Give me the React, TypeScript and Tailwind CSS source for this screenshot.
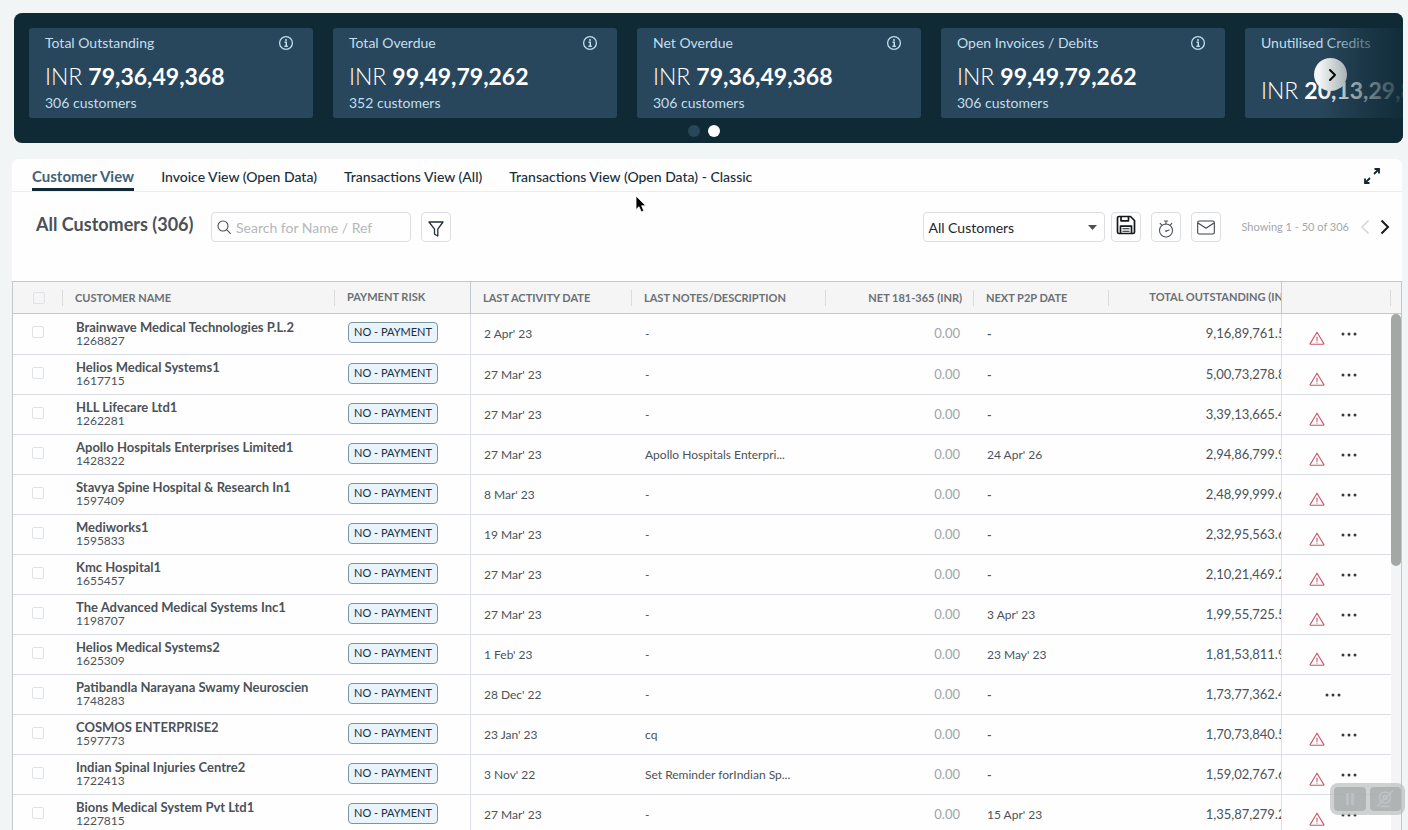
import React from "react";

type Row = {
  name: string;
  id: string;
  activity: string;
  note: string;
  p2p: string;
  total: string;
  alert: boolean;
};

const rows: Row[] = [
  { name: "Brainwave Medical Technologies P.L.2", id: "1268827", activity: "2 Apr' 23", note: "-", p2p: "-", total: "9,16,89,761.50", alert: true },
  { name: "Helios Medical Systems1", id: "1617715", activity: "27 Mar' 23", note: "-", p2p: "-", total: "5,00,73,278.80", alert: true },
  { name: "HLL Lifecare Ltd1", id: "1262281", activity: "27 Mar' 23", note: "-", p2p: "-", total: "3,39,13,665.40", alert: true },
  { name: "Apollo Hospitals Enterprises Limited1", id: "1428322", activity: "27 Mar' 23", note: "Apollo Hospitals Enterpri...", p2p: "24 Apr' 26", total: "2,94,86,799.90", alert: true },
  { name: "Stavya Spine Hospital & Research In1", id: "1597409", activity: "8 Mar' 23", note: "-", p2p: "-", total: "2,48,99,999.60", alert: true },
  { name: "Mediworks1", id: "1595833", activity: "19 Mar' 23", note: "-", p2p: "-", total: "2,32,95,563.60", alert: true },
  { name: "Kmc Hospital1", id: "1655457", activity: "27 Mar' 23", note: "-", p2p: "-", total: "2,10,21,469.20", alert: true },
  { name: "The Advanced Medical Systems Inc1", id: "1198707", activity: "27 Mar' 23", note: "-", p2p: "3 Apr' 23", total: "1,99,55,725.50", alert: true },
  { name: "Helios Medical Systems2", id: "1625309", activity: "1 Feb' 23", note: "-", p2p: "23 May' 23", total: "1,81,53,811.90", alert: true },
  { name: "Patibandla Narayana Swamy Neuroscien", id: "1748283", activity: "28 Dec' 22", note: "-", p2p: "-", total: "1,73,77,362.40", alert: false },
  { name: "COSMOS ENTERPRISE2", id: "1597773", activity: "23 Jan' 23", note: "cq", p2p: "-", total: "1,70,73,840.50", alert: true },
  { name: "Indian Spinal Injuries Centre2", id: "1722413", activity: "3 Nov' 22", note: "Set Reminder forIndian Sp...", p2p: "-", total: "1,59,02,767.60", alert: true },
  { name: "Bions Medical System Pvt Ltd1", id: "1227815", activity: "27 Mar' 23", note: "-", p2p: "15 Apr' 23", total: "1,35,87,279.20", alert: true },
];

const cards = [
  { title: "Total Outstanding", amount: "79,36,49,368", sub: "306 customers" },
  { title: "Total Overdue", amount: "99,49,79,262", sub: "352 customers" },
  { title: "Net Overdue", amount: "79,36,49,368", sub: "306 customers" },
  { title: "Open Invoices / Debits", amount: "99,49,79,262", sub: "306 customers" },
  { title: "Unutilised Credits", amount: "20,13,29,894", sub: "" },
];

const tabs = ["Customer View", "Invoice View (Open Data)", "Transactions View (All)", "Transactions View (Open Data) - Classic"];

function InfoIcon() {
  return (
    <svg className="size-4" viewBox="0 0 16 16" fill="none" stroke="currentColor">
      <circle cx="8" cy="8" r="6.4" strokeWidth="1.3" />
      <circle cx="8" cy="4.9" r="1" fill="currentColor" stroke="none" />
      <path d="M6.6 7.3H8.3V11M6.4 11.2H9.8" strokeWidth="1.4" />
    </svg>
  );
}

function WarningIcon() {
  return (
    <svg className="h-4 w-4" viewBox="0 0 16 16" fill="none" stroke="#cc5566" strokeLinejoin="round" strokeLinecap="round">
      <path d="M8 2.200 14.900 13.600a.4.4 0 0 1-.3.6H1.400a.4.4 0 0 1-.3-.6Z" strokeWidth="1.100" />
      <path d="M8 7v3.400M8 12v.3" strokeWidth="1.100" />
    </svg>
  );
}

function DotsIcon() {
  return (
    <svg className="h-1 w-4" viewBox="0 0 16 4" fill="#343b42">
      <circle cx="2" cy="2" r="1.5" />
      <circle cx="8" cy="2" r="1.5" />
      <circle cx="14" cy="2" r="1.5" />
    </svg>
  );
}

function ToolButton({ label, children }: { label: string; children: React.ReactNode }) {
  return (
    <button type="button" aria-label={label} className="flex size-[30px] shrink-0 items-center justify-center rounded border border-[#dcdee2] bg-white">
      {children}
    </button>
  );
}

function SummaryBar() {
  return (
    <section className="relative mr-[5px] ml-[14px] shrink-0 overflow-hidden rounded-lg bg-[#0f2a35] pt-[15px] pb-[6px] pl-[15px]">
      <div className="flex gap-5">
        {cards.map((card) => (
          <article key={card.title} className="flex h-[90px] w-[284px] shrink-0 flex-col rounded-[3px] bg-[#29475c] px-4 pb-[6px] text-[#c3deed]">
            <div className="flex h-[30px] items-center justify-between pr-[3px]">
              <h2 className="text-sm">{card.title}</h2>
              <InfoIcon />
            </div>
            <p className={card.sub ? "flex flex-1 items-center gap-[6px] text-[23px] text-white" : "flex flex-1 items-center gap-[6px] pt-[10px] text-[23px] text-white"}>
              <span className="font-light">INR</span>
              <span className="font-bold">{card.amount}</span>
            </p>
            {card.sub && <p className="text-sm leading-[18px]">{card.sub}</p>}
          </article>
        ))}
      </div>
      <div className="mt-[7px] flex justify-center gap-2 pr-6">
        <button type="button" aria-label="Page 1" className="size-3 rounded-full bg-[#29475c]" />
        <button type="button" aria-label="Page 2" className="size-3 rounded-full bg-white" />
      </div>
      <button type="button" aria-label="Next" className="absolute top-[45px] right-[56px] flex size-[33px] items-center justify-center rounded-full bg-[#f5f5f5]">
        <svg className="ml-1 size-4" viewBox="0 0 16 16" fill="none" stroke="#000" strokeWidth="2" strokeLinecap="round" strokeLinejoin="round">
          <path d="m5 3 5 5-5 5" />
        </svg>
      </button>
      <div className="pointer-events-none absolute inset-y-0 right-0 w-[84px] bg-linear-to-r from-[#0f2a35]/0 via-[#0f2a35]/50 to-[#0f2a35]/90" />
    </section>
  );
}

function Tabs() {
  return (
    <nav className="flex h-[33px] shrink-0 justify-between border-b border-[#eceef1] pr-[21px] pl-5">
      <div className="flex gap-[27px]">
        {tabs.map((tab, i) => (
          <a
            key={tab}
            href="#"
            className={
              i === 0
                ? "flex h-8 items-center border-b-3 border-[#0f2a35] pt-[5px] text-[15px] font-bold text-[#3f6279]"
                : "flex h-8 items-center pt-[2px] text-[14px] font-medium text-[#182f3b]"
            }
          >
            {tab}
          </a>
        ))}
      </div>
      <button type="button" aria-label="Expand" className="pt-px">
        <svg className="size-[18px]" viewBox="0 0 18 18" fill="none" stroke="#15262e" strokeWidth="1.8">
          <path d="M11.500 2h4.500v4.500M16 2l-5 5M6.500 16H2v-4.500M2 16l5-5" />
        </svg>
      </button>
    </nav>
  );
}

function Toolbar() {
  return (
    <div className="flex h-[89px] shrink-0 items-start justify-between pt-5 pr-[10px] pl-6">
      <div className="flex">
        <h1 className="w-[175px] whitespace-nowrap text-lg leading-6 font-bold text-[#4b5157]">All Customers (306)</h1>
        <label className="flex h-[30px] w-[200px] items-center gap-[5px] rounded border border-[#dcdee2] px-[5px]">
          <svg className="size-[14px] shrink-0" viewBox="0 0 14 14" fill="none" stroke="#4b5157" strokeWidth="1.1" strokeLinecap="round">
            <circle cx="6" cy="6" r="5" />
            <path d="m9.800 9.800 3.500 3.500" />
          </svg>
          <input aria-label="Search" placeholder="Search for Name / Ref" className="min-w-0 flex-1 text-[14px] outline-none placeholder:text-[#b3b8bc]" />
        </label>
        <div className="ml-[10px]">
          <ToolButton label="Filter">
            <svg className="mt-1 size-4" viewBox="0 0 16 16" fill="none" stroke="#23303a" strokeWidth="1.3" strokeLinejoin="round">
              <path d="M1 1h14L9.800 8.200V15l-3.300-1.800V8.200Z" />
            </svg>
          </ToolButton>
        </div>
      </div>
      <div className="flex items-center">
        <div className="relative">
          <select aria-label="Customer filter" className="h-[30px] w-[182px] appearance-none rounded border border-[#dcdee2] bg-white pl-1 text-[14px] text-[#1e252b]">
            <option>All Customers</option>
          </select>
          <svg className="pointer-events-none absolute top-[13px] right-2 h-[5px] w-[9px]" viewBox="0 0 9 5" fill="#4b5157">
            <path d="M0 0h9L4.500 5Z" />
          </svg>
        </div>
        <div className="ml-[6px] flex gap-[10px]">
          <ToolButton label="Save">
            <svg className="mb-[5px] size-5" viewBox="0 0 20 20" fill="none" stroke="#15191d" strokeWidth="1.7" strokeLinejoin="round">
              <path d="M1.500 3a1.500 1.500 0 0 1 1.500-1.500h11.500l4 4V17a1.500 1.500 0 0 1-1.500 1.500H3A1.500 1.500 0 0 1 1.500 17Z" />
              <path d="M5 1.500v4.300h7.500V1.500M4.500 18.500v-7.300h11v7.300" />
              <path d="M6.500 13.700h7M6.500 16.200h7" strokeWidth="1.100" />
            </svg>
          </ToolButton>
          <ToolButton label="Schedule">
            <svg className="mt-[3px] h-[18px] w-4" viewBox="0 0 16 18" fill="none" stroke="#4b5157" strokeWidth="1.1" strokeLinecap="round">
              <circle cx="8" cy="10.500" r="6.500" />
              <path d="M6.300 1h3.400M8 1v3M2.200 3.300l1.300 1.500M13.800 3.300l-1.300 1.500M8 11.200l3-1.200" />
              <circle cx="8" cy="11" r=".8" fill="#4b5157" stroke="none" />
            </svg>
          </ToolButton>
          <ToolButton label="Email">
            <svg className="h-[15px] w-[18px]" viewBox="0 0 18 15" fill="none" stroke="#3f454b" strokeWidth="1.100" strokeLinejoin="round">
              <rect x=".7" y="1" width="16.600" height="13" rx="1.500" />
              <path d="m1 3 8 5.300L17 3" />
            </svg>
          </ToolButton>
        </div>
        <span className="ml-5 text-[11px] text-[#a3a8ad]">Showing 1 - 50 of 306</span>
        <button type="button" aria-label="Previous page" className="ml-[7px]">
          <svg className="size-4" viewBox="0 0 16 16" fill="none" stroke="#d3d6d9" strokeWidth="1.500">
            <path d="M12.500 1.500 6 8l6.500 6.500" />
          </svg>
        </button>
        <button type="button" aria-label="Next page" className="ml-1">
          <svg className="size-4" viewBox="0 0 16 16" fill="none" stroke="#15191d" strokeWidth="2">
            <path d="M5.500 1.500 12 8l-6.500 6.500" />
          </svg>
        </button>
      </div>
    </div>
  );
}

const headInner = "h-4 border-r border-[#d9dde0] pl-3 text-left leading-4";
const check = "block size-3 appearance-none rounded-[2px] border border-[#dfe2e5] bg-transparent";
const cell = "border-b border-[#dcdfe4] p-0";

function CustomerTable() {
  return (
    <div className="relative min-h-0 flex-1 overflow-hidden border border-b-0 border-[#c3c8cd]">
      <table className="w-full table-fixed border-separate border-spacing-0 text-[12px] text-[#4c5258]">
        <colgroup>
          <col className="w-[50px]" />
          <col className="w-[272px]" />
          <col className="w-[136px]" />
          <col className="w-[161px]" />
          <col className="w-[194px]" />
          <col className="w-[148px]" />
          <col className="w-[135px]" />
          <col />
          <col className="w-[109px]" />
          <col className="w-[10px]" />
        </colgroup>
        <thead>
          <tr className="h-8 bg-[#f5f5f6] text-[11px] whitespace-nowrap text-[#6b7075] [&>th]:border-b [&>th]:border-[#c3c8cd] [&>th]:p-0 [&>th]:font-bold">
            <th>
              <div className="flex h-4 items-center border-r border-[#d9dde0] pl-5">
                <input type="checkbox" aria-label="Select all" className={check} />
              </div>
            </th>
            <th><div className={headInner}>CUSTOMER NAME</div></th>
            <th className="border-r"><div className="pl-3 text-left">PAYMENT RISK</div></th>
            <th><div className={headInner}>LAST ACTIVITY DATE</div></th>
            <th><div className={headInner}>LAST NOTES/DESCRIPTION</div></th>
            <th><div className="h-4 border-r border-[#d9dde0] pr-[11px] text-right leading-4">NET 181-365 (INR)</div></th>
            <th><div className={headInner}>NEXT P2P DATE</div></th>
            <th className="overflow-hidden border-r"><div className="-mr-3 text-right">TOTAL OUTSTANDING (INR)</div></th>
            <th><div className="h-4 border-r border-[#d9dde0]" /></th>
            <th />
          </tr>
        </thead>
        <tbody>
          {rows.map((row) => (
            <tr key={row.id} className="h-10 whitespace-nowrap first:h-[41px]">
              <td className={cell}>
                <input type="checkbox" aria-label={`Select ${row.name}`} className={`${check} mb-1 ml-[19px]`} />
              </td>
              <td className={cell}>
                <div className="pb-px pl-[13px] leading-[14px]">
                  <div className="text-[13px] font-bold">{row.name}</div>
                  <div>{row.id}</div>
                </div>
              </td>
              <td className={`${cell} border-r`}>
                <span className="mb-[3px] ml-[13px] flex h-[21px] w-[90px] items-center justify-center rounded border border-[#7d95a1] bg-[#e8f3fb] text-[11px] text-[#182f3b]">
                  NO - PAYMENT
                </span>
              </td>
              <td className={cell}><div className="pl-[13px]">{row.activity}</div></td>
              <td className={cell}><div className="pl-[13px]">{row.note}</div></td>
              <td className={cell}><div className="pr-[14px] text-right text-[13px] text-[#a0a4a8]">0.00</div></td>
              <td className={cell}>
                <div className={row.p2p === "-" ? "pl-[13px] font-bold" : "pl-[13px]"}>{row.p2p}</div>
              </td>
              <td className={`${cell} overflow-hidden border-r`}><div className="-mr-3 text-right text-[13px]">{row.total}</div></td>
              <td className={cell}>
                <div className="flex items-center justify-center gap-4 pr-2">
                  {row.alert && (
                    <button type="button" aria-label="Alert" className="pt-2">
                      <WarningIcon />
                    </button>
                  )}
                  <button type="button" aria-label="More actions">
                    <DotsIcon />
                  </button>
                </div>
              </td>
              <td className="p-0" />
            </tr>
          ))}
        </tbody>
      </table>
      <div className="absolute top-8 right-0 bottom-0 w-[10px] bg-[#f3f4f5]">
        <div className="h-[252px] rounded-full bg-[#a3a8a5]" />
      </div>
    </div>
  );
}

function RecorderControls() {
  return (
    <div className="absolute right-[3px] bottom-[15px] flex h-8 w-[75px] gap-1 rounded-lg bg-[#b9bfbd]/70 p-1">
      <button type="button" aria-label="Pause" className="flex flex-1 items-center justify-center rounded bg-[#a4a6a8]/70">
        <svg className="size-4" viewBox="0 0 16 16" stroke="#b9c2c9" strokeWidth="2.500">
          <path d="M5.500 2v12M10.500 2v12" />
        </svg>
      </button>
      <button type="button" aria-label="Camera off" className="flex flex-1 items-center justify-center rounded bg-[#a4a6a8]/70">
        <svg className="size-[18px]" viewBox="0 0 18 18" fill="none" stroke="#bfc3c5" strokeWidth="1.500" strokeLinecap="round">
          <circle cx="9" cy="7.500" r="5.500" />
          <circle cx="9" cy="7.500" r="2" />
          <path d="M4.500 16.500h9M16.500 1l-15 15" />
        </svg>
      </button>
    </div>
  );
}

export default function App() {
  return (
    <div className="relative flex h-screen flex-col overflow-hidden bg-[#f2f5f6] pt-[13px] font-['Lato',sans-serif]">
      <SummaryBar />
      <main className="mt-4 mr-[6px] ml-3 flex min-h-0 flex-1 flex-col rounded-t-md bg-[#fefefe]">
        <Tabs />
        <Toolbar />
        <CustomerTable />
      </main>
      <RecorderControls />
      <svg className="pointer-events-none absolute top-[195px] left-[635px] h-[18px] w-3" viewBox="0 0 12 18">
        <path d="M1 1v13.500l3-2.800 2.300 5.200 2.500-1.100-2.200-5h4.200Z" fill="#000" stroke="#fff" strokeWidth=".8" />
      </svg>
    </div>
  );
}
